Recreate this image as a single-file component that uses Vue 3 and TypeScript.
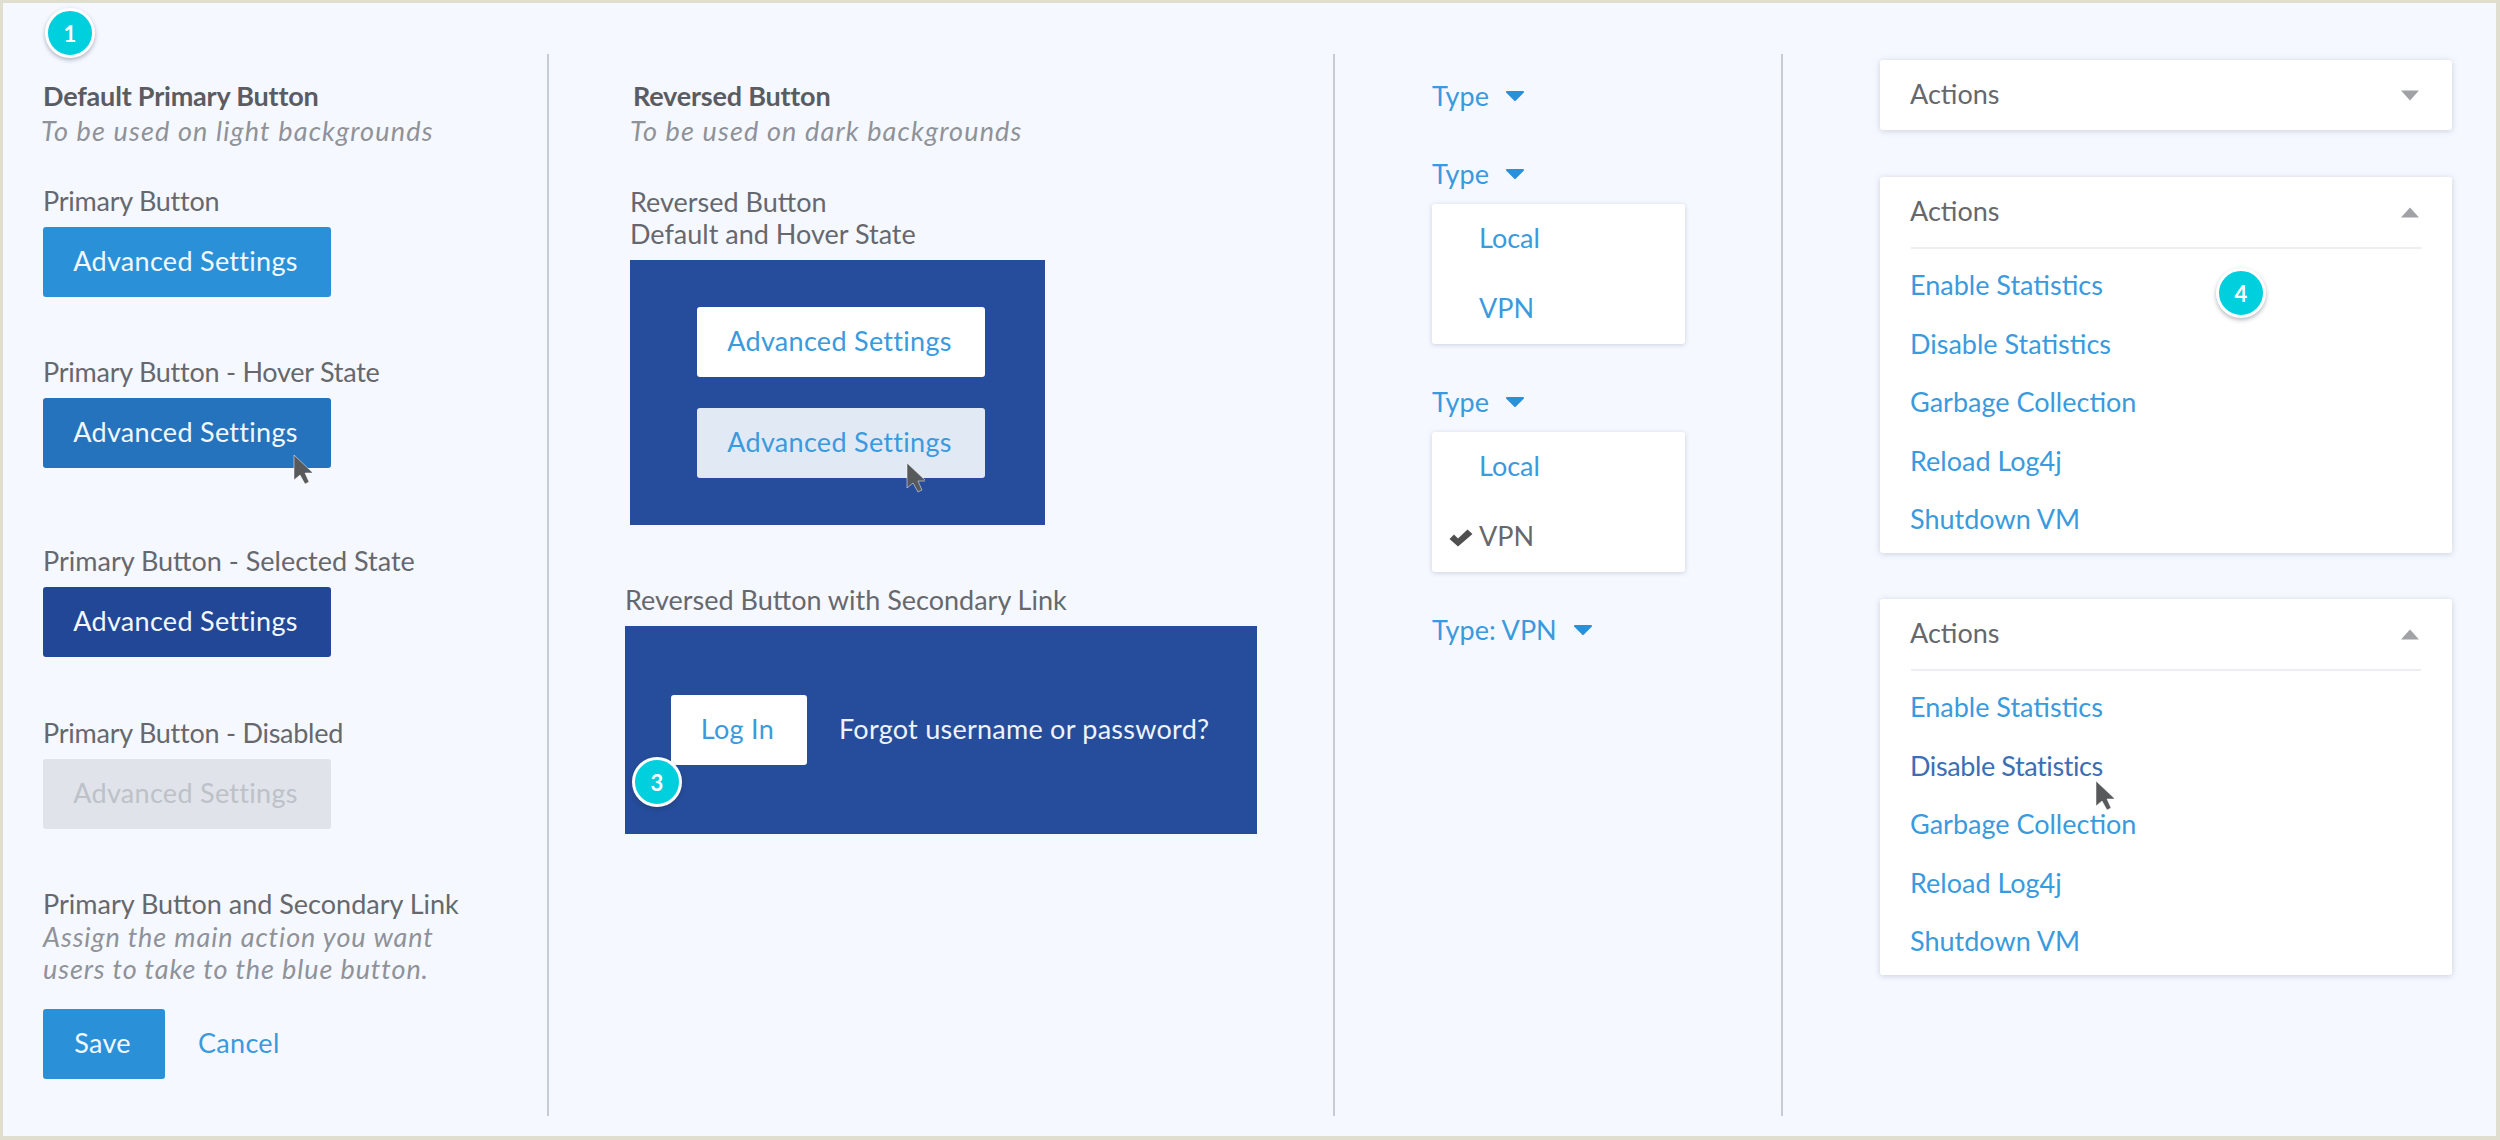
<script setup lang="ts">
const actions: string[] = ['Enable Statistics', 'Disable Statistics', 'Garbage Collection', 'Reload Log4j', 'Shutdown VM']
</script>

<template>
  <div class="frame">
    <section class="col col1">
      <span class="badge b1">1</span>
      <h2 class="title">Default Primary Button</h2>
      <p class="note shift">To be used on light backgrounds</p>

      <p class="label snug m36">Primary Button</p>
      <div class="btn primary">Advanced Settings</div>

      <p class="label snug m58">Primary Button - Hover State</p>
      <div class="btn hover">
        Advanced Settings
        <svg class="cursor c1" viewBox="0 0 19 31"><path d="M1 1v25l6-5 5 9 4-2-4-9h8z" /></svg>
      </div>

      <p class="label m76">Primary Button - Selected State</p>
      <div class="btn selected">Advanced Settings</div>

      <p class="label snug m59">Primary Button - Disabled</p>
      <div class="btn disabled">Advanced Settings</div>

      <p class="label m58">Primary Button and Secondary Link</p>
      <p class="note tight">Assign the main action you want<br />users to take to the blue button.</p>
      <div class="save-row">
        <div class="btn primary save">Save</div>
        <span class="link">Cancel</span>
      </div>
    </section>

    <section class="col col2">
      <h2 class="title nudge">Reversed Button</h2>
      <p class="note">To be used on dark backgrounds</p>
      <p class="label tight-label m38">Reversed Button<br />Default and Hover State</p>
      <div class="panel states">
        <div class="btn reversed">Advanced Settings</div>
        <div class="btn reversed rev-hover">
          Advanced Settings
          <svg class="cursor c2" viewBox="0 0 19 31"><path d="M1 1v25l6-5 5 9 4-2-4-9h8z" /></svg>
        </div>
      </div>
      <div class="secondary">
        <p class="label">Reversed Button with Secondary Link</p>
        <div class="panel login">
          <div class="btn reversed log">Log In</div>
          <span class="forgot">Forgot username or password?</span>
          <span class="badge b3">3</span>
        </div>
      </div>
    </section>

    <section class="col col3">
      <div class="type first">Type <svg class="caret" viewBox="0 0 18 10"><path d="M1 1h16L9 9z" /></svg></div>
      <div class="type m44">Type <svg class="caret" viewBox="0 0 18 10"><path d="M1 1h16L9 9z" /></svg></div>
      <ul class="menu">
        <li>Local</li>
        <li>VPN</li>
      </ul>
      <div class="type m41">Type <svg class="caret" viewBox="0 0 18 10"><path d="M1 1h16L9 9z" /></svg></div>
      <ul class="menu">
        <li>Local</li>
        <li class="checked">
          <svg class="check" viewBox="0 0 24 18"><path d="M.5 10 5 5.5l4 4 9.500-9 5 4.500L9 17.500z" /></svg>
          VPN
        </li>
      </ul>
      <div class="type m41">Type: VPN <svg class="caret" viewBox="0 0 18 10"><path d="M1 1h16L9 9z" /></svg></div>
    </section>

    <section class="col col4">
      <div class="card">
        <header class="card-head">
          <span class="head-text">Actions</span>
          <svg class="tri" viewBox="0 0 18 11"><path d="M0 .5h18l-9 10z" /></svg>
        </header>
      </div>

      <div class="card open m47">
        <header class="card-head">
          <span class="head-text">Actions</span>
          <svg class="tri" viewBox="0 0 18 11"><path d="M0 10.500h18L9 .5z" /></svg>
        </header>
        <ul class="actions">
          <li v-for="a in actions" :key="a">{{ a }}</li>
        </ul>
        <span class="badge b4">4</span>
      </div>

      <div class="card open m46">
        <header class="card-head">
          <span class="head-text">Actions</span>
          <svg class="tri" viewBox="0 0 18 11"><path d="M0 10.500h18L9 .5z" /></svg>
        </header>
        <ul class="actions">
          <li v-for="a in actions" :key="a" :class="{ active: a === 'Disable Statistics' }">
            {{ a }}
            <svg v-if="a === 'Disable Statistics'" class="cursor c3" viewBox="0 0 19 31"><path d="M1 1v25l6-5 5 9 4-2-4-9h8z" /></svg>
          </li>
        </ul>
      </div>
    </section>
  </div>
</template>

<style>
html,
body {
  margin: 0;
  background: #f5f8ff;
}
</style>

<style scoped>
.frame {
  box-sizing: border-box;
  width: 2500px;
  height: 1140px;
  border-style: solid;
  border-color: #dfdecf;
  border-width: 3px 4px 4px 3px;
  background: #f5f8ff;
  display: grid;
  grid-template-columns: 546px 786px 448px 1fr;
  font-family: 'Lato', 'Liberation Sans', sans-serif;
  font-size: 27px;
  color: #66686d;
  overflow: hidden;
}
.col {
  position: relative;
  box-sizing: border-box;
  margin-top: 51px;
  height: 1062px;
  padding-top: 26px;
  border-right: 2px solid #c6ccd6;
}
.col1 { padding-left: 40px; }
.col2 { padding-left: 81px; }
.col3 { padding-left: 97px; }
.col4 { padding: 6px 0 0 97px; border-right: 0; }

p, h2, ul { margin: 0; padding: 0; }
ul { list-style: none; }

.title {
  font-size: 27px;
  line-height: 32px;
  margin-bottom: 2px;
  font-weight: 700;
  letter-spacing: -0.2px;
  color: #5a5c61;
}
.nudge { margin-left: 3px; }
.note {
  line-height: 34px;
  font-style: italic;
  letter-spacing: 1.15px;
  color: #8f9298;
}
.note.shift { margin-left: -2px; }
.note.tight { line-height: 32px; letter-spacing: 0.9px; }
.label { line-height: 34px; }
.label.snug { letter-spacing: -0.25px; }
.tight-label { line-height: 32px; }
.m36 { margin-top: 36px; }
.m38 { margin-top: 38px; }
.m41 { margin-top: 41px; }
.m44 { margin-top: 44px; }
.m46 { margin-top: 46px; }
.m47 { margin-top: 47px; }
.m58 { margin-top: 58px; }
.m59 { margin-top: 59px; }
.m76 { margin-top: 76px; }

.btn {
  position: relative;
  box-sizing: border-box;
  width: 288px;
  height: 70px;
  margin-top: 9px;
  padding: 0 3px 3px 0;
  border-radius: 3px;
  display: flex;
  align-items: center;
  justify-content: center;
  letter-spacing: 0.3px;
  color: #f2f8fd;
}
.primary { background: #2a91d9; }
.hover { background: #2573bc; }
.selected { background: #214796; }
.disabled { background: #e0e3ea; color: #bdc1c8; }
.save { width: 122px; margin-top: 0; }
.save-row {
  display: flex;
  align-items: center;
  gap: 33px;
  margin-top: 24px;
}
.link { color: #3a9ade; letter-spacing: 0.3px; margin-bottom: 3px; }

.panel { background: #254d9b; }
.states {
  box-sizing: border-box;
  width: 415px;
  height: 265px;
  margin-top: 10px;
  padding: 47px 0 0 67px;
  display: flex;
  flex-direction: column;
  gap: 31px;
}
.reversed { background: #fff; color: #3a9ade; margin-top: 0; }
.rev-hover { background: #e1eaf4; }
.secondary { margin: 58px 0 0 -5px; }
.login {
  position: relative;
  box-sizing: border-box;
  width: 632px;
  height: 208px;
  margin-top: 9px;
  padding-left: 46px;
  display: flex;
  align-items: center;
  gap: 32px;
}
.log { width: 136px; }
.forgot { color: #eef3fb; letter-spacing: 0.25px; margin-bottom: 4px; }

.type {
  line-height: 34px;
  color: #3a9ade;
  display: flex;
  align-items: center;
  gap: 17px;
}
.type.first { margin-top: -1px; }
.caret { width: 18px; height: 10px; fill: #2a91d9; stroke: #2a91d9; stroke-width: 2; stroke-linejoin: round; }
.menu {
  width: 253px;
  height: 140px;
  margin-top: 13px;
  border-radius: 3px;
  background: #fff;
  box-shadow: 0 1px 5px rgba(60, 70, 90, 0.22);
}
.menu li {
  position: relative;
  height: 70px;
  line-height: 67px;
  padding-left: 47px;
  color: #3a9ade;
}
.menu li.checked { color: #66686d; }
.check { position: absolute; left: 17px; top: 27px; width: 24px; height: 18px; fill: #505050; }

.card {
  position: relative;
  width: 572px;
  border-radius: 3px;
  background: #fff;
  box-shadow: 0 1px 6px rgba(60, 70, 90, 0.22);
}
.card-head {
  box-sizing: border-box;
  height: 70px;
  padding: 0 33px 0 30px;
  display: flex;
  align-items: center;
  justify-content: space-between;
}
.head-text { padding-bottom: 3px; }
.tri { width: 18px; height: 11px; fill: #a0a2a5; }
.open { height: 376px; }
.actions {
  margin: 0 31px;
  padding-top: 8px;
  border-top: 2px solid #eceef1;
}
.actions li {
  position: relative;
  height: 58.5px;
  line-height: 55.5px;
  margin-left: -1px;
  color: #3a9ade;
}
.actions li.active { color: #3b6fb4; letter-spacing: -0.4px; }

.badge {
  position: absolute;
  box-sizing: border-box;
  width: 50px;
  height: 50px;
  border: 3px solid #fff;
  border-radius: 50%;
  background: #00cfde;
  color: #fff;
  font-size: 22px;
  font-weight: 700;
  display: flex;
  align-items: center;
  justify-content: center;
  box-shadow: 0 2px 4px rgba(40, 50, 70, 0.35);
}
.b1 { left: 42px; top: -46px; }
.b3 { left: 7px; top: 131px; }
.b4 { left: 336px; top: 91px; }

.cursor {
  position: absolute;
  width: 19px;
  height: 31px;
  fill: #58595b;
  stroke: rgba(255, 255, 255, 0.5);
  stroke-width: 1;
}
.c1 { left: 250px; top: 56px; }
.c2 { left: 209px; top: 54px; }
.c3 { left: 185px; top: 42px; }
</style>
